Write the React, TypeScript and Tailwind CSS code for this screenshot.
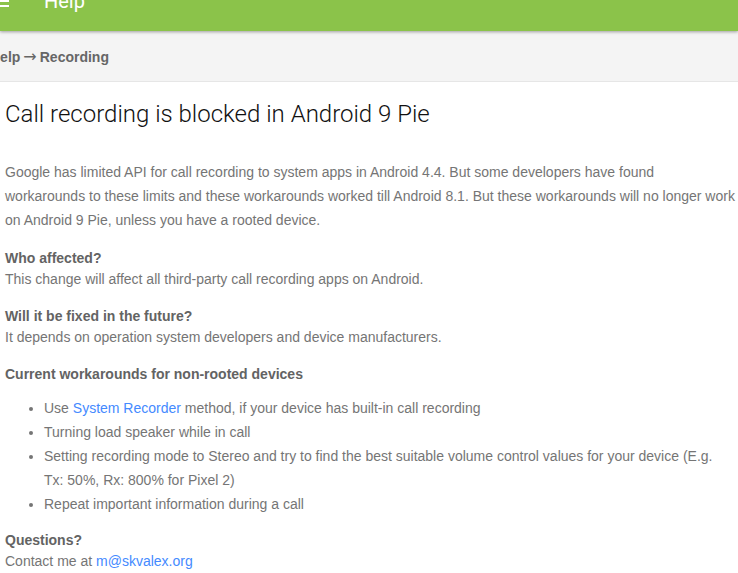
import React from "react";

export default function App() {
  const body = { fontFamily: '"Liberation Sans", Arial, sans-serif' };
  return (
    <div className="w-[738px] h-[573px] overflow-hidden bg-white relative" style={body}>
      <header className="relative z-10 h-[31px] bg-[#8bc34a] shadow-[0_1px_3px_rgba(0,0,0,0.35)] overflow-hidden">
        <div className="absolute left-0 top-[-5px] w-[9px] flex flex-col gap-[3px]">
          <div className="h-[2px] bg-white" />
          <div className="h-[2px] bg-white" />
          <div className="h-[2px] bg-white" />
        </div>
        <div
          className="absolute left-[44px] top-[-13px] text-[20px] leading-[28px] text-white"
          style={{ fontFamily: "Roboto, sans-serif" }}
        >
          Help
        </div>
      </header>
      <div className="h-[51px] bg-[#f4f4f4] border-b border-[#e6e6e6] flex items-center">
        <div className="ml-[-10px] pt-[2px] text-[14px] leading-[20px] font-bold text-[#666666] whitespace-nowrap flex items-center">
          <span>Help</span>
          <span
            className="font-normal mx-[3px] leading-[20px]"
            style={{ fontFamily: '"DejaVu Sans", sans-serif', fontSize: "16px" }}
          >
            →
          </span>
          <span>Recording</span>
        </div>
      </div>
      <main className="pl-[5px] text-[14px] text-[#757575] whitespace-nowrap">
        <h1
          className="mt-[16px] text-[24px] leading-[32px] font-light text-[#111111]"
          style={{ fontFamily: "Roboto, sans-serif" }}
        >
          Call recording is blocked in Android 9 Pie
        </h1>
        <p className="mt-[30px] leading-[24px]">
          Google has limited API for call recording to system apps in Android 4.4. But some developers have found
          <br />
          workarounds to these limits and these workarounds worked till Android 8.1. But these workarounds will no longer work
          <br />
          on Android 9 Pie, unless you have a rooted device.
        </p>
        <p className="mt-[16px] leading-[21px]">
          <b className="text-[#636363]">Who affected?</b>
          <br />
          This change will affect all third-party call recording apps on Android.
        </p>
        <p className="mt-[16px] leading-[21px]">
          <b className="text-[#636363]">Will it be fixed in the future?</b>
          <br />
          It depends on operation system developers and device manufacturers.
        </p>
        <p className="mt-[16px] leading-[21px]">
          <b className="text-[#636363]">Current workarounds for non-rooted devices</b>
        </p>
        <ul className="mt-[11px] pl-[39px] list-disc leading-[24px] marker:text-[#757575]">
          <li>
            Use <a className="text-[#448aff]">System Recorder</a> method, if your device has built-in call recording
          </li>
          <li>Turning load speaker while in call</li>
          <li>
            Setting recording mode to Stereo and try to find the best suitable volume control values for your device (E.g.
            <br />
            Tx: 50%, Rx: 800% for Pixel 2)
          </li>
          <li>Repeat important information during a call</li>
        </ul>
        <p className="mt-[14px] leading-[21px]">
          <b className="text-[#636363]">Questions?</b>
          <br />
          Contact me at <a className="text-[#448aff]">m@skvalex.org</a>
        </p>
      </main>
    </div>
  );
}
